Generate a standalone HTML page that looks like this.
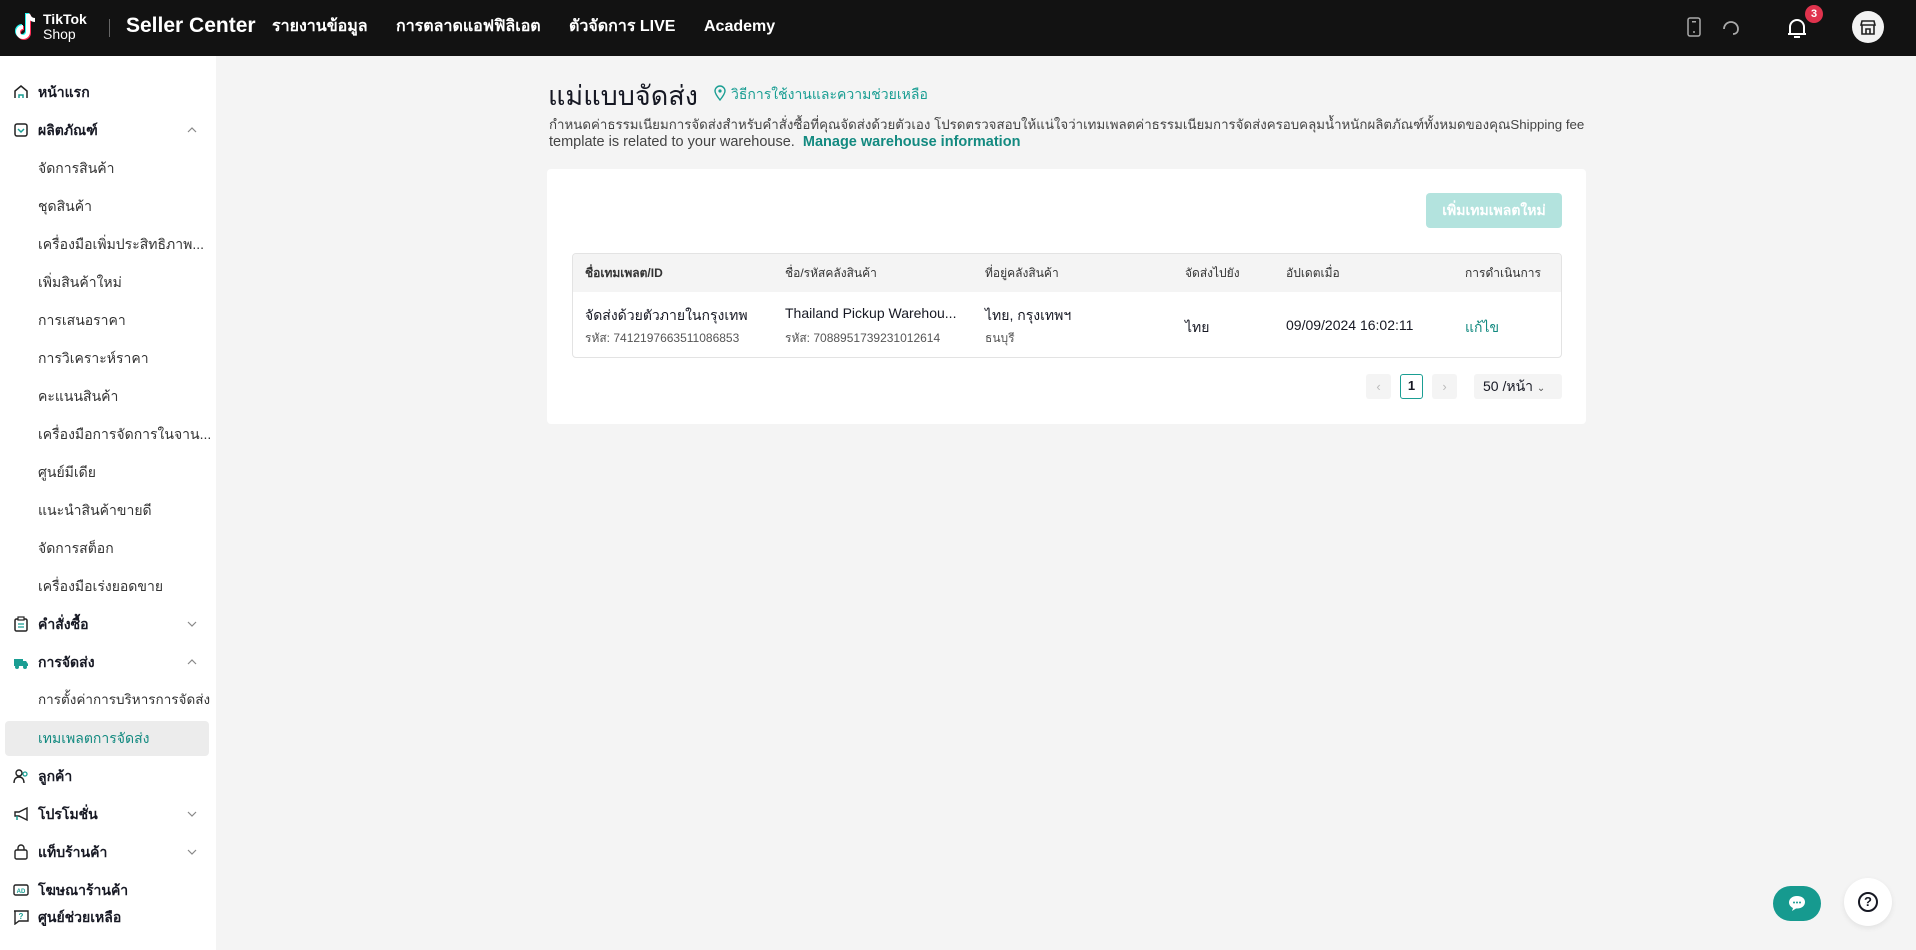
<!DOCTYPE html>
<html><head><meta charset="utf-8"><style>
*{box-sizing:border-box;margin:0;padding:0}
body{width:1916px;height:950px;overflow:hidden;background:#f4f4f4;font-family:"Liberation Sans","Noto Sans CJK SC",sans-serif;color:#161823;position:relative}
.hdr{position:absolute;left:0;top:0;width:1916px;height:56px;background:#121212;color:#fff}
.abs{position:absolute;white-space:nowrap}
.nav{font-size:16px;font-weight:bold;top:15px;line-height:24px}
.side{position:absolute;left:0;top:56px;width:216px;height:894px;background:#fff}
.it{position:absolute;left:38px;font-size:14px;color:#333;white-space:nowrap;line-height:20px}
.it.b{font-weight:bold;color:#161823}
.ic{position:absolute;left:13px;width:16px;height:16px}
.chev{position:absolute;left:186px;width:12px;height:12px}
.card{position:absolute;left:547px;top:169px;width:1039px;height:255px;background:#fff;border-radius:4px}
.th{position:absolute;top:264px;font-size:12px;color:#333}
.td{position:absolute;font-size:14px;color:#161823;white-space:nowrap}
.sm{font-size:12px;color:#555}
</style></head><body>
<div class="hdr">
 <svg class="abs" style="left:14px;top:12px" width="24" height="30" viewBox="0 0 24 30"><path d="M14 2v18a5 5 0 1 1-5-5" fill="none" stroke="#25f4ee" stroke-width="4" transform="translate(-1,-1)"/><path d="M14 2v18a5 5 0 1 1-5-5" fill="none" stroke="#fe2c55" stroke-width="4" transform="translate(1,1)"/><path d="M14 2v18a5 5 0 1 1-5-5M14 2c1 4 4 6 7 6" fill="none" stroke="#fff" stroke-width="4"/></svg>
 <div class="abs" style="left:43px;top:12px;font-size:14px;font-weight:bold;line-height:14px">TikTok</div>
 <div class="abs" style="left:43px;top:27px;font-size:14px;line-height:14px">Shop</div>
 <div class="abs" style="left:109px;top:19px;width:1px;height:18px;background:#666"></div>
 <div class="abs" style="left:126px;top:14px;font-size:21px;font-weight:bold">Seller Center</div>
 <div class="abs nav" style="left:272px">รายงานข้อมูล</div>
 <div class="abs nav" style="left:396px">การตลาดแอฟฟิลิเอต</div>
 <div class="abs nav" style="left:569px">ตัวจัดการ LIVE</div>
 <div class="abs nav" style="left:704px">Academy</div>
 <svg class="abs" style="left:1687px;top:17px" width="14" height="20"><rect x="1" y="1" width="12" height="18" rx="2" fill="none" stroke="#aaa" stroke-width="1.5"/><rect x="5" y="4" width="4" height="1.5" fill="#aaa"/><circle cx="7" cy="15" r="1" fill="#aaa"/></svg>
 <svg class="abs" style="left:1721px;top:17px" width="20" height="20"><path d="M3 12a7 7 0 1 1 14 0" fill="none" stroke="#aaa" stroke-width="1.8"/><path d="M17 12c0 3-2 5-5 5" fill="none" stroke="#aaa" stroke-width="1.8"/></svg>
 <svg class="abs" style="left:1786px;top:16px" width="22" height="24"><path d="M4 18V11a7 7 0 0 1 14 0v7H2h18" fill="none" stroke="#fff" stroke-width="2"/><path d="M8 21h6" stroke="#fff" stroke-width="2"/></svg>
 <div class="abs" style="left:1805px;top:5px;width:18px;height:18px;border-radius:9px;background:#e0334d;font-size:11px;font-weight:bold;text-align:center;line-height:18px">3</div>
 <div class="abs" style="left:1852px;top:11px;width:32px;height:32px;border-radius:16px;background:#f2f2f2"></div>
 <svg class="abs" style="left:1860px;top:19px" width="16" height="16"><path d="M2 2h12l1 4H1zM2 6v9h12V6M6 15v-5h4v5" fill="none" stroke="#222" stroke-width="1.6"/></svg>
</div>

<div class="side">
 <svg class="ic" style="top:28px" viewBox="0 0 16 16"><path d="M2 14V7l6-5 6 5v7" fill="none" stroke="#222" stroke-width="1.5"/><path d="M6 14v-3h4v3" fill="none" stroke="#1a9e93" stroke-width="1.5"/></svg>
 <div class="it b" style="top:26px">หน้าแรก</div>
 <svg class="ic" style="top:66px" viewBox="0 0 16 16"><rect x="2" y="2" width="12" height="12" rx="2" fill="none" stroke="#222" stroke-width="1.5"/><path d="M5 7l3 3 3-3" fill="none" stroke="#1a9e93" stroke-width="1.5"/></svg>
 <div class="it b" style="top:64px">ผลิตภัณฑ์</div>
 <svg class="chev" style="top:68px"><path d="M2 8l4-4 4 4" fill="none" stroke="#888" stroke-width="1.2"/></svg>
 <div class="it" style="top:102px">จัดการสินค้า</div>
 <div class="it" style="top:140px">ชุดสินค้า</div>
 <div class="it" style="top:178px">เครื่องมือเพิ่มประสิทธิภาพ...</div>
 <div class="it" style="top:216px">เพิ่มสินค้าใหม่</div>
 <div class="it" style="top:254px">การเสนอราคา</div>
 <div class="it" style="top:292px">การวิเคราะห์ราคา</div>
 <div class="it" style="top:330px">คะแนนสินค้า</div>
 <div class="it" style="top:368px">เครื่องมือการจัดการในจาน...</div>
 <div class="it" style="top:406px">ศูนย์มีเดีย</div>
 <div class="it" style="top:444px">แนะนำสินค้าขายดี</div>
 <div class="it" style="top:482px">จัดการสต็อก</div>
 <div class="it" style="top:520px">เครื่องมือเร่งยอดขาย</div>
 <svg class="ic" style="top:560px" viewBox="0 0 16 16"><rect x="2" y="3" width="12" height="12" rx="1.5" fill="none" stroke="#222" stroke-width="1.5"/><rect x="5" y="1" width="6" height="3" fill="#fff" stroke="#222" stroke-width="1.2"/><path d="M5 8h6M5 11h6" stroke="#1a9e93" stroke-width="1.3"/></svg>
 <div class="it b" style="top:558px">คำสั่งซื้อ</div>
 <svg class="chev" style="top:562px"><path d="M2 4l4 4 4-4" fill="none" stroke="#888" stroke-width="1.2"/></svg>
 <svg class="ic" style="top:598px" viewBox="0 0 16 16"><path d="M1 5h9v7H1zM10 7h3l2 3v2h-5z" fill="#1a9e93"/><circle cx="4" cy="13" r="2" fill="#1a9e93"/><circle cx="12" cy="13" r="2" fill="#1a9e93"/></svg>
 <div class="it b" style="top:596px">การจัดส่ง</div>
 <svg class="chev" style="top:600px"><path d="M2 8l4-4 4 4" fill="none" stroke="#888" stroke-width="1.2"/></svg>
 <div class="it" style="top:634px;font-size:13.5px">การตั้งค่าการบริหารการจัดส่ง</div>
 <div style="position:absolute;left:5px;top:665px;width:204px;height:35px;background:#ececec;border-radius:4px"></div>
 <div class="it" style="top:672px;color:#138a80">เทมเพลตการจัดส่ง</div>
 <svg class="ic" style="top:712px" viewBox="0 0 16 16"><circle cx="6" cy="5" r="3" fill="none" stroke="#222" stroke-width="1.4"/><path d="M1 15c0-4 2-6 5-6s5 2 5 6" fill="none" stroke="#222" stroke-width="1.4"/><circle cx="12" cy="6" r="2" fill="none" stroke="#1a9e93" stroke-width="1.3"/></svg>
 <div class="it b" style="top:710px">ลูกค้า</div>
 <svg class="ic" style="top:750px" viewBox="0 0 16 16"><path d="M2 6h4l8-4v12l-8-4H2z" fill="none" stroke="#222" stroke-width="1.4"/><path d="M4 10v4" stroke="#1a9e93" stroke-width="1.5"/></svg>
 <div class="it b" style="top:748px">โปรโมชั่น</div>
 <svg class="chev" style="top:752px"><path d="M2 4l4 4 4-4" fill="none" stroke="#888" stroke-width="1.2"/></svg>
 <svg class="ic" style="top:788px" viewBox="0 0 16 16"><rect x="2" y="6" width="12" height="9" rx="1.5" fill="none" stroke="#222" stroke-width="1.4"/><path d="M5 6V4a3 3 0 0 1 6 0v2" fill="none" stroke="#222" stroke-width="1.4"/></svg>
 <div class="it b" style="top:786px">แท็บร้านค้า</div>
 <svg class="chev" style="top:790px"><path d="M2 4l4 4 4-4" fill="none" stroke="#888" stroke-width="1.2"/></svg>
 <svg class="ic" style="top:826px" viewBox="0 0 16 16"><rect x="1" y="3" width="14" height="10" rx="1.5" fill="none" stroke="#222" stroke-width="1.4"/><text x="8" y="11" font-size="6" text-anchor="middle" fill="#1a9e93" font-weight="bold">AD</text></svg>
 <div class="it b" style="top:824px">โฆษณาร้านค้า</div>
 <svg class="ic" style="top:853px" viewBox="0 0 16 16"><path d="M1 2h14v10H6l-4 3V2z" fill="none" stroke="#222" stroke-width="1.4"/><text x="8" y="10" font-size="8" text-anchor="middle" fill="#1a9e93" font-weight="bold">?</text></svg>
 <div class="it b" style="top:851px">ศูนย์ช่วยเหลือ</div>
</div>

<div class="abs" style="left:548px;top:74px;font-size:27px;color:#161823">แม่แบบจัดส่ง</div>
<svg class="abs" style="left:714px;top:85px" width="12" height="16"><path d="M6 15C2 10 1 8 1 6a5 5 0 0 1 10 0c0 2-1 4-5 9z" fill="none" stroke="#1a9e93" stroke-width="1.4"/><circle cx="6" cy="6" r="1.6" fill="#1a9e93"/></svg>
<div class="abs" style="left:731px;top:84px;font-size:14px;color:#1a9e93">วิธีการใช้งานและความช่วยเหลือ</div>
<div class="abs" style="left:549px;top:114px;font-size:13.3px;color:#444">กำหนดค่าธรรมเนียมการจัดส่งสำหรับคำสั่งซื้อที่คุณจัดส่งด้วยตัวเอง โปรดตรวจสอบให้แน่ใจว่าเทมเพลตค่าธรรมเนียมการจัดส่งครอบคลุมน้ำหนักผลิตภัณฑ์ทั้งหมดของคุณShipping fee</div>
<div class="abs" style="left:549px;top:134px;font-size:14.5px;color:#444">template is related to your warehouse.&nbsp; <b style="color:#138a80">Manage warehouse information</b></div>

<div class="card"></div>
<div class="abs" style="left:1426px;top:193px;width:136px;height:35px;background:#b3e3de;border-radius:4px;color:#fff;font-size:14px;font-weight:bold;text-align:center;line-height:35px">เพิ่มเทมเพลตใหม่</div>
<div class="abs" style="left:572px;top:253px;width:990px;height:105px;border:1px solid #e3e3e3;border-radius:4px;overflow:hidden"><div style="height:38px;background:#f4f4f4"></div></div>
<div class="th abs" style="left:585px;font-weight:bold">ชื่อเทมเพลต/ID</div>
<div class="th abs" style="left:785px">ชื่อ/รหัสคลังสินค้า</div>
<div class="th abs" style="left:985px">ที่อยู่คลังสินค้า</div>
<div class="th abs" style="left:1185px">จัดส่งไปยัง</div>
<div class="th abs" style="left:1286px">อัปเดตเมื่อ</div>
<div class="th abs" style="left:1465px">การดำเนินการ</div>
<div class="td" style="left:585px;top:305px">จัดส่งด้วยตัวภายในกรุงเทพ</div>
<div class="td sm" style="left:585px;top:329px">รหัส: 7412197663511086853</div>
<div class="td" style="left:785px;top:305px">Thailand Pickup Warehou...</div>
<div class="td sm" style="left:785px;top:329px">รหัส: 7088951739231012614</div>
<div class="td" style="left:985px;top:305px">ไทย, กรุงเทพฯ</div>
<div class="td sm" style="left:985px;top:329px">ธนบุรี</div>
<div class="td" style="left:1185px;top:317px">ไทย</div>
<div class="td" style="left:1286px;top:317px">09/09/2024 16:02:11</div>
<div class="td" style="left:1465px;top:317px;color:#138a80">แก้ไข</div>

<div class="abs" style="left:1366px;top:374px;width:25px;height:25px;background:#f4f4f4;border-radius:3px;color:#bbb;text-align:center;line-height:25px;font-size:13px">‹</div>
<div class="abs" style="left:1400px;top:374px;width:23px;height:25px;border:1.5px solid #1a9e93;border-radius:3px;text-align:center;line-height:22px;font-size:13px;font-weight:bold">1</div>
<div class="abs" style="left:1432px;top:374px;width:25px;height:25px;background:#f4f4f4;border-radius:3px;color:#bbb;text-align:center;line-height:25px;font-size:13px">›</div>
<div class="abs" style="left:1474px;top:374px;width:88px;height:25px;background:#f4f4f4;border-radius:3px;font-size:14px;line-height:25px;padding-left:9px">50 /หน้า <span style="font-size:10px;color:#555">&#8964;</span></div>

<div class="abs" style="left:1773px;top:886px;width:48px;height:35px;border-radius:18px;background:#169a8f"></div>
<svg class="abs" style="left:1788px;top:895px" width="18" height="17"><path d="M9 1C4 1 1 4 1 7.5c0 2.5 2 4.5 4 5.5l-1 3 4-2.5h1c5 0 8-3 8-6.5S14 1 9 1z" fill="#fff"/><circle cx="6" cy="7.5" r="1" fill="#169a8f"/><circle cx="9" cy="7.5" r="1" fill="#169a8f"/><circle cx="12" cy="7.5" r="1" fill="#169a8f"/></svg>
<div class="abs" style="left:1844px;top:878px;width:48px;height:48px;border-radius:24px;background:#fff;box-shadow:0 2px 6px rgba(0,0,0,.08)"></div>
<div class="abs" style="left:1858px;top:892px;width:20px;height:20px;border:2px solid #161823;border-radius:10px;text-align:center;font-size:13px;font-weight:bold;line-height:16px">?</div>
</body></html>
